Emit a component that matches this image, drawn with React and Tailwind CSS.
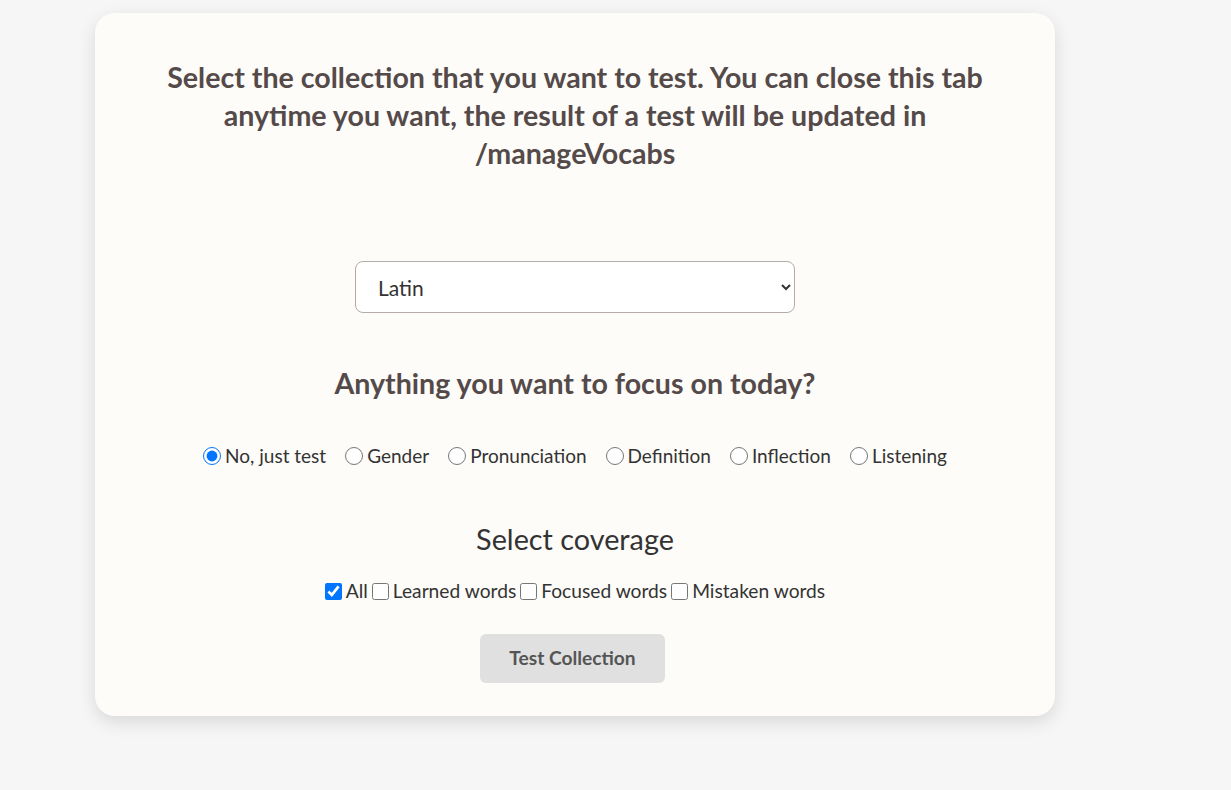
import React, { useState } from 'react'

const focusOptions = ["No, just test", "Gender", "Pronunciation", "Definition", "Inflection", "Listening"];
const coverageOptions = ["All", "Learned words", "Focused words", "Mistaken words"];

export default function App() {
  const [focus, setFocus] = useState("No, just test");
  const [coverage, setCoverage] = useState({ "All": true });

  return (
    <div className="min-h-screen w-full bg-[#f6f6f6] font-['Lato',sans-serif] pt-[13px]">
      <div className="ml-[95px] w-[960px] h-[703px] rounded-[20px] bg-[#fdfcf8] shadow-[0_6px_18px_rgba(0,0,0,0.12)] flex flex-col items-center pt-[45px]">
        <h1 className="w-[840px] text-center text-[28.6px] leading-[38px] font-bold text-[#554a4a]">
          Select the collection that you want to test. You can close this tab anytime you want, the result of a test will be updated in /manageVocabs
        </h1>

        <select className="mt-[89px] w-[440px] h-[52px] rounded-lg border border-[#b5abab] bg-white pl-[18px] pr-2 text-[21px] text-[#333] outline-none">
          <option>Latin</option>
        </select>

        <h2 className="mt-[51px] text-[28.6px] leading-[38px] font-bold text-[#554a4a]">
          Anything you want to focus on today?
        </h2>

        <div className="mt-[42px] flex items-center gap-[19px] text-[19px] leading-[24px] text-[#333]">
          {focusOptions.map((opt) => (
            <label key={opt} className="flex items-center gap-[4px]">
              <input
                type="radio"
                name="focus"
                checked={focus === opt}
                onChange={() => setFocus(opt)}
                className="w-[18px] h-[18px] m-0 accent-[#0075ff]"
              />
              {opt}
            </label>
          ))}
        </div>

        <h3 className="mt-[53px] text-[28.8px] leading-[36px] text-[#333]">Select coverage</h3>

        <div className="mt-[22px] flex items-center gap-[4px] text-[19.2px] leading-[24px] text-[#333]">
          {coverageOptions.map((opt) => (
            <label key={opt} className="flex items-center gap-[4px]">
              <input
                type="checkbox"
                checked={!!coverage[opt]}
                onChange={() => setCoverage({ ...coverage, [opt]: !coverage[opt] })}
                className="w-[17px] h-[17px] m-0 accent-[#0075ff]"
              />
              {opt}
            </label>
          ))}
        </div>

        <button className="mt-[31px] mr-[5px] w-[185px] h-[49px] rounded-md bg-[#e0e0e0] text-[19.2px] font-bold text-[#555]">
          Test Collection
        </button>
      </div>
    </div>
  )
}
